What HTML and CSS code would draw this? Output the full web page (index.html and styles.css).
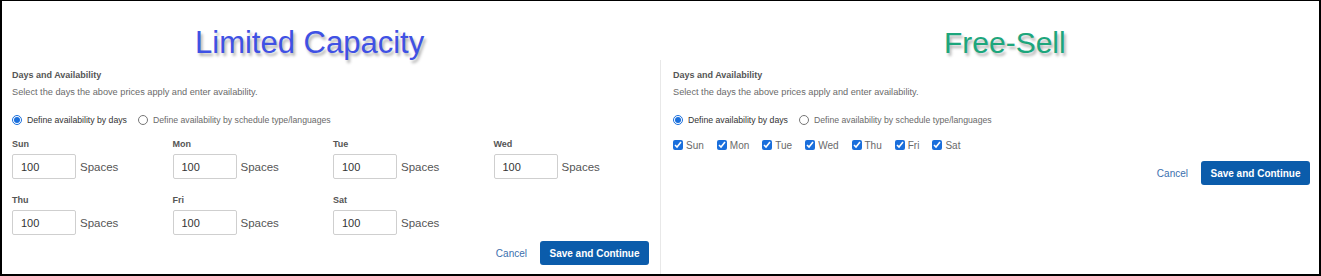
FILE: index.html
```html
<!DOCTYPE html>
<html lang="en">
<head>
  <meta charset="UTF-8" />
  <title>Limited Capacity vs Free-Sell</title>
  <link rel="stylesheet" href="styles.css">
</head>
<body>
  <div class="frame">
    <section class="panel panel-left">
      <div class="title title-limited">Limited Capacity</div>
      <div class="card">
        <h3>Days and Availability</h3>
        <p class="desc">Select the days the above prices apply and enter availability.</p>
        <div class="radio-row">
          <label class="radio active"><input type="radio" name="mode1" checked> Define availability by days</label>
          <label class="radio"><input type="radio" name="mode1"> Define availability by schedule type/languages</label>
        </div>
        <div class="days-grid">
          <div class="day">
            <div class="day-name">Sun</div>
            <div class="day-input"><input type="text" value="100"><span>Spaces</span></div>
          </div>
          <div class="day">
            <div class="day-name">Mon</div>
            <div class="day-input"><input type="text" value="100"><span>Spaces</span></div>
          </div>
          <div class="day">
            <div class="day-name">Tue</div>
            <div class="day-input"><input type="text" value="100"><span>Spaces</span></div>
          </div>
          <div class="day">
            <div class="day-name">Wed</div>
            <div class="day-input"><input type="text" value="100"><span>Spaces</span></div>
          </div>
          <div class="day">
            <div class="day-name">Thu</div>
            <div class="day-input"><input type="text" value="100"><span>Spaces</span></div>
          </div>
          <div class="day">
            <div class="day-name">Fri</div>
            <div class="day-input"><input type="text" value="100"><span>Spaces</span></div>
          </div>
          <div class="day">
            <div class="day-name">Sat</div>
            <div class="day-input"><input type="text" value="100"><span>Spaces</span></div>
          </div>
        </div>
        <div class="actions actions-left">
          <a class="cancel" href="#">Cancel</a>
          <button type="button">Save and Continue</button>
        </div>
      </div>
    </section>

    <section class="panel panel-right">
      <div class="title title-free">Free-Sell</div>
      <div class="card card-right">
        <h3>Days and Availability</h3>
        <p class="desc">Select the days the above prices apply and enter availability.</p>
        <div class="radio-row">
          <label class="radio active"><input type="radio" name="mode2" checked> Define availability by days</label>
          <label class="radio"><input type="radio" name="mode2"> Define availability by schedule type/languages</label>
        </div>
        <div class="check-row">
          <label class="check"><input type="checkbox" checked>Sun</label>
          <label class="check"><input type="checkbox" checked>Mon</label>
          <label class="check"><input type="checkbox" checked>Tue</label>
          <label class="check"><input type="checkbox" checked>Wed</label>
          <label class="check"><input type="checkbox" checked>Thu</label>
          <label class="check"><input type="checkbox" checked>Fri</label>
          <label class="check"><input type="checkbox" checked>Sat</label>
        </div>
        <div class="actions actions-right">
          <a class="cancel" href="#">Cancel</a>
          <button type="button">Save and Continue</button>
        </div>
      </div>
    </section>
  </div>
</body>
</html>
```

FILE: styles.css
```css
* {
  box-sizing: border-box;
  font-family: "Liberation Sans", Arial, sans-serif;
}

body {
  margin: 0;
  background: #fff;
}

.frame {
  width: 1321px;
  height: 276px;
  border: 2px solid #000;
  border-top-width: 1px;
  display: flex;
  overflow: hidden;
}

.panel {
  display: flex;
  flex-direction: column;
}

.panel-left {
  width: 658px;
}

.panel-right {
  flex: 1;
}

.title {
  height: 59px;
  padding-top: 24px;
  font-size: 30px;
  line-height: 36px;
  text-shadow: 2px 3px 3px rgba(0, 0, 0, 0.3);
  white-space: nowrap;
}

.title-limited {
  color: #3f51e4;
  font-size: 31px;
  padding-left: 193px;
}

.title-free {
  color: #1da67c;
  padding-left: 284px;
}

.card {
  flex: 1;
  padding: 9px 11px 0 10px;
}

.card-right {
  border-left: 1px solid #e8e8e8;
  padding: 9px 9px 0 12px;
}

.card h3 {
  margin: 0;
  font-size: 9px;
  line-height: 12px;
  font-weight: bold;
  color: #555;
}

.desc {
  margin: 5px 0 0;
  font-size: 9.2px;
  line-height: 12px;
  color: #6a6a6a;
}

.radio-row {
  margin-top: 15px;
  height: 14px;
  display: flex;
  align-items: center;
  gap: 11px;
}

.radio {
  display: flex;
  align-items: center;
  gap: 5px;
  font-size: 8.7px;
  color: #6a6a6a;
}

.radio.active {
  color: #333;
}

.radio input {
  margin: 0;
  width: 10px;
  height: 10px;
  accent-color: #1a6fdc;
}

.days-grid {
  margin-top: 11px;
  display: grid;
  grid-template-columns: repeat(4, 160.5px);
  row-gap: 15px;
}

.day-name {
  font-size: 9px;
  line-height: 12px;
  font-weight: bold;
  color: #555;
  margin-bottom: 4px;
}

.day-input {
  display: flex;
  align-items: center;
  gap: 4px;
}

.day-input input {
  width: 64px;
  height: 25px;
  border: 1px solid #cfcfcf;
  border-radius: 2px;
  padding: 0 0 0 8px;
  font-size: 11px;
  color: #333;
  outline: none;
}

.day-input span {
  font-size: 11.5px;
  color: #555;
}

.check-row {
  margin-top: 12px;
  height: 12px;
  display: flex;
  align-items: center;
}

.check {
  display: flex;
  align-items: center;
  gap: 3px;
  margin-right: 13px;
  font-size: 10px;
  color: #6a6a6a;
}

.check input {
  margin: 0;
  width: 10px;
  height: 10px;
  accent-color: #1a6fdc;
}

.actions {
  display: flex;
  justify-content: flex-end;
  align-items: center;
  gap: 13px;
}

.actions-left {
  margin-top: 6px;
}

.actions-right {
  margin-top: 10px;
}

.cancel {
  font-size: 10px;
  color: #3c6fae;
  text-decoration: none;
}

button {
  height: 24px;
  padding: 0 9.5px;
  border: none;
  border-radius: 3px;
  background: #0b5cab;
  color: #fff;
  font-size: 10px;
  font-weight: bold;
  cursor: pointer;
}
```
